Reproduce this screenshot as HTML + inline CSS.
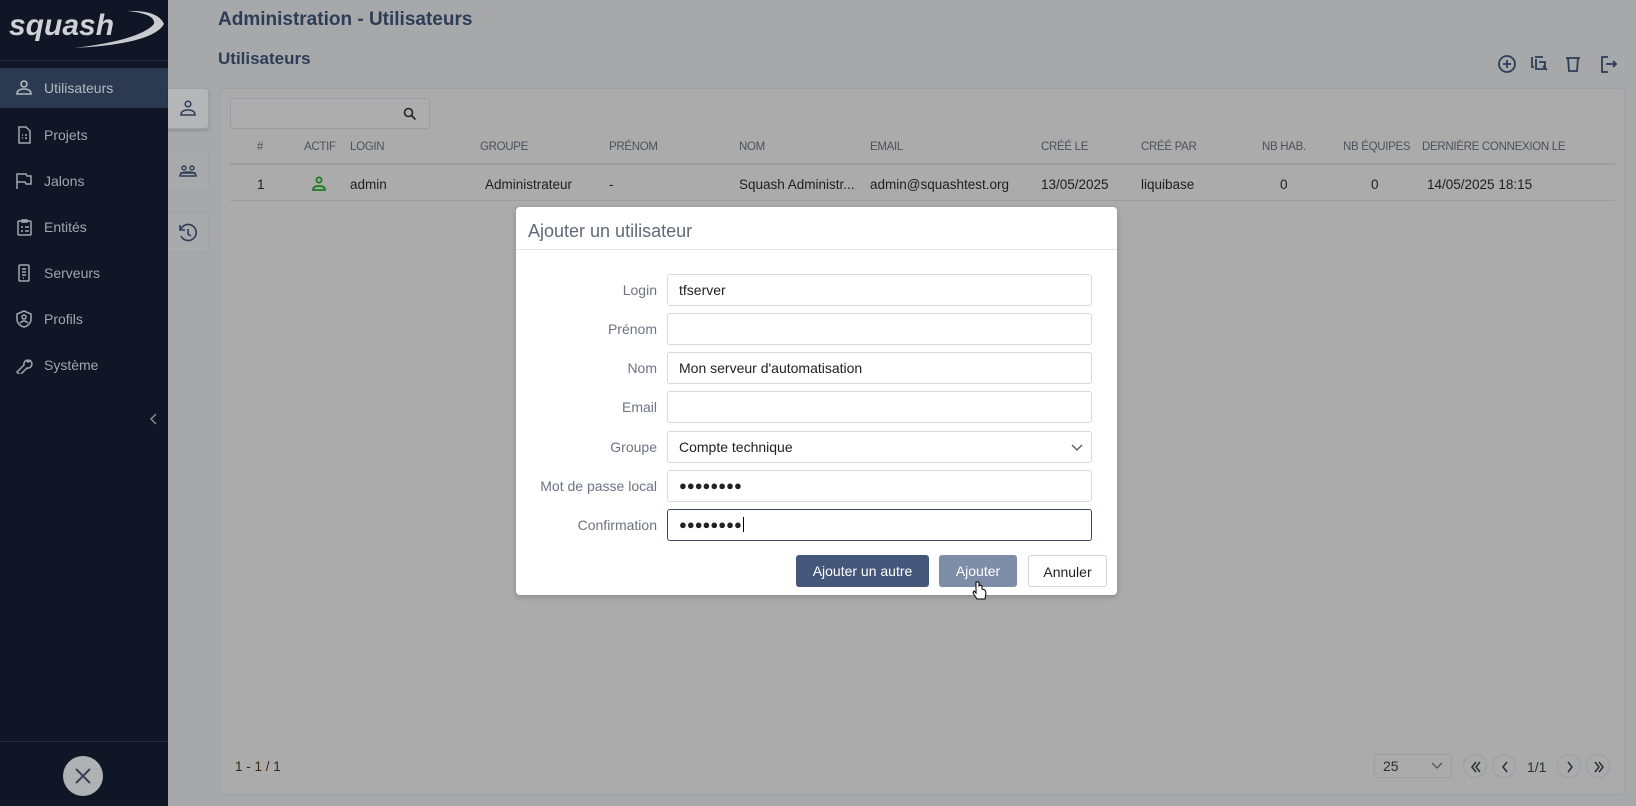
<!DOCTYPE html>
<html><head><meta charset="utf-8"><style>
*{box-sizing:border-box;margin:0;padding:0}
body{width:1636px;height:806px;overflow:hidden;background:#a7a8aa;font-family:"Liberation Sans",sans-serif;position:relative}
.abs{position:absolute}
#side{left:0;top:0;width:168px;height:806px;background:#111626}
.nav{position:absolute;left:0;width:168px;height:40px;color:#a2a6ae;font-size:14px;line-height:40px;padding-left:44px}
.nav svg{position:absolute;left:15px;top:11px}
.nav.act{background:#2c3a51;color:#b3b8c0}
.hdr{position:absolute;font-size:11.5px;letter-spacing:-0.3px;color:#4a525d;top:141px}
.cell{position:absolute;font-size:13.5px;color:#1f1f1f;top:177px}
.tab{position:absolute;left:168px;width:41px;height:41px;background:#a9aaac;border:1px solid #9fa2a6;border-left:none;border-radius:0 4px 4px 0}
.lbl{position:absolute;right:0;width:140px;text-align:right;font-size:14px;color:#6b7480}
.inp{position:absolute;left:667px;width:425px;height:32px;border:1px solid #d6d9de;border-radius:3px;background:#fff;font-size:14px;color:#222;padding-left:11px;line-height:30px}
.btn{position:absolute;top:555px;height:32px;border-radius:3px;font-size:14px;line-height:32px;text-align:center}
.pg{position:absolute;top:754px;width:24px;height:24px;border:1px solid #9c9ea2;border-radius:50%}
.pg svg{position:absolute;left:5px;top:5px}
</style></head><body>
<div id="side" class="abs">
  <div class="abs" style="left:8px;top:4px;width:158px;height:48px">
    <svg width="158" height="48" viewBox="0 0 158 48"><path d="M66 44 Q145 40 156 20 Q150 6 120 7 Q148 10 146 20 Q132 36 66 44Z" fill="#c9cbcf"/><text x="1" y="31" font-family="Liberation Sans" font-style="italic" font-weight="bold" font-size="30" fill="#cfd1d5">squash</text></svg>
  </div>
  <div class="abs" style="left:0;top:60px;width:168px;height:1px;background:#262c3c"></div>
  <div class="nav act" style="top:68px"><svg width="18" height="18" viewBox="0 0 18 18" fill="none" stroke="#b3b8c0" stroke-width="1.6"><circle cx="9" cy="5" r="3"/><path d="M2 15 Q2 10 9 10 Q16 10 16 15Z"/></svg>Utilisateurs</div>
  <div class="nav" style="top:115px"><svg width="18" height="18" viewBox="0 0 18 18" fill="none" stroke="#a2a6ae" stroke-width="1.5"><path d="M4 1h7l4 4v12H4z"/><path d="M7 9h1M10 9h2M7 12h1M10 12h2"/></svg>Projets</div>
  <div class="nav" style="top:161px"><svg width="18" height="18" viewBox="0 0 18 18" fill="none" stroke="#a2a6ae" stroke-width="1.5"><path d="M2 17V2h9l1 2h4v8h-5l-1-2H2"/></svg>Jalons</div>
  <div class="nav" style="top:207px"><svg width="18" height="18" viewBox="0 0 18 18" fill="none" stroke="#a2a6ae" stroke-width="1.5"><rect x="3" y="3" width="13" height="14" rx="1"/><path d="M7 2h5v2H7zM6 9h2M10 9h4M6 13h2M10 13h4"/></svg>Entités</div>
  <div class="nav" style="top:253px"><svg width="18" height="18" viewBox="0 0 18 18" fill="none" stroke="#a2a6ae" stroke-width="1.5"><rect x="4" y="1" width="10" height="16" rx="1"/><path d="M7 5h4M7 8h4M7 11h4M8 14h1"/></svg>Serveurs</div>
  <div class="nav" style="top:299px"><svg width="18" height="18" viewBox="0 0 18 18" fill="none" stroke="#a2a6ae" stroke-width="1.5"><path d="M9 1l7 3v5c0 4-3 7-7 8-4-1-7-4-7-8V4z"/><circle cx="9" cy="7" r="2"/><path d="M5 13q4-4 8 0"/></svg>Profils</div>
  <div class="nav" style="top:345px"><svg width="18" height="18" viewBox="0 0 18 18" fill="none" stroke="#a2a6ae" stroke-width="1.5"><path d="M2 16l7-7a4 4 0 1 1 3 3l-7 7z M11 4l2 2 3-2"/></svg>Système</div>
  <svg class="abs" style="left:150px;top:413px" width="8" height="12" fill="none" stroke="#8a8f99" stroke-width="1.4"><path d="M6 1L1 6l5 5"/></svg>
  <div class="abs" style="left:0;top:741px;width:168px;height:1px;background:#262c3c"></div>
  <div class="abs" style="left:63px;top:756px;width:40px;height:40px;border-radius:50%;background:#b0b1b3"><svg width="40" height="40"><path d="M13 13L27 27M27 13L13 27" stroke="#364459" stroke-width="2"/></svg></div>
</div>

<div class="abs" style="left:218px;top:9px;font-size:19px;font-weight:bold;color:#2e3d57">Administration - Utilisateurs</div>
<div class="abs" style="left:218px;top:49px;font-size:17px;font-weight:bold;color:#2e3d57">Utilisateurs</div>
<svg class="abs" style="left:1495px;top:51px" width="135" height="26" fill="none" stroke="#2e3d57" stroke-width="1.8">
  <circle cx="12" cy="13" r="8"/><path d="M12 9v8M8 13h8"/>
  <path d="M37 6v10h2M41 8v10h10M44 11h6v6M48 15l4 4"/><path d="M40 6h8"/>
  <path d="M71 7h14M73 7l1 13h8l1-13"/>
  <path d="M113 6h-6v15h6M111 13h10M118 10l3 3-3 3"/>
</svg>

<div class="abs" style="left:220px;top:88px;width:1405px;height:707px;background:#ababab;border:1px solid #9ea1a5;border-radius:4px"></div>
<div class="tab" style="top:88px;background:#b5b6b8;box-shadow:0 2px 3px rgba(0,0,0,.15)"><svg width="40" height="40" fill="none" stroke="#2e3d57" stroke-width="1.5"><circle cx="20" cy="15" r="2.8"/><path d="M13 26q0-5 7-5t7 5z"/></svg></div>
<div class="tab" style="top:150px"><svg width="40" height="40" fill="none" stroke="#2e3d57" stroke-width="1.4"><circle cx="16" cy="17" r="2"/><circle cx="24" cy="17" r="2"/><path d="M12 25q0-4 8-4t8 4zM12 22h16"/></svg></div>
<div class="tab" style="top:212px"><svg width="40" height="40" fill="none" stroke="#2e3d57" stroke-width="1.6"><path d="M13 16a8 8 0 1 1 0 7M12 12v5h5M20 16v5l3 2"/></svg></div>

<div class="abs" style="left:230px;top:98px;width:200px;height:31px;border:1px solid #9a9da2;border-radius:3px;background:#adadad"><svg class="abs" style="left:172px;top:8px" width="14" height="14" fill="none" stroke="#222" stroke-width="1.6"><circle cx="5.5" cy="5.5" r="4"/><path d="M8.5 8.5l4 4"/></svg></div>

<div class="hdr" style="left:257px">#</div>
<div class="hdr" style="left:304px">ACTIF</div>
<div class="hdr" style="left:350px">LOGIN</div>
<div class="hdr" style="left:480px">GROUPE</div>
<div class="hdr" style="left:609px">PRÉNOM</div>
<div class="hdr" style="left:739px">NOM</div>
<div class="hdr" style="left:870px">EMAIL</div>
<div class="hdr" style="left:1041px">CRÉÉ LE</div>
<div class="hdr" style="left:1141px">CRÉÉ PAR</div>
<div class="hdr" style="left:1262px">NB HAB.</div>
<div class="hdr" style="left:1343px">NB ÉQUIPES</div>
<div class="hdr" style="left:1422px">DERNIÈRE CONNEXION LE</div>
<div class="abs" style="left:230px;top:163px;width:1385px;height:2px;background:#9a9da1"></div>
<div class="cell" style="left:257px">1</div>
<svg class="abs" style="left:310px;top:175px" width="18" height="18" fill="none" stroke="#1b7a22" stroke-width="1.7"><circle cx="9" cy="5" r="2.6"/><path d="M3 15q0-4 6-4t6 4z"/></svg>
<div class="cell" style="left:350px">admin</div>
<div class="cell" style="left:485px">Administrateur</div>
<div class="cell" style="left:609px">-</div>
<div class="cell" style="left:739px">Squash Administr...</div>
<div class="cell" style="left:870px">admin@squashtest.org</div>
<div class="cell" style="left:1041px">13/05/2025</div>
<div class="cell" style="left:1141px">liquibase</div>
<div class="cell" style="left:1280px">0</div>
<div class="cell" style="left:1371px">0</div>
<div class="cell" style="left:1427px">14/05/2025 18:15</div>
<div class="abs" style="left:230px;top:200px;width:1385px;height:1px;background:#9a9da1"></div>

<div class="abs" style="left:235px;top:759px;font-size:13.5px;color:#3a2a10">1 - 1 / 1</div>
<div class="abs" style="left:1374px;top:754px;width:78px;height:24px;border:1px solid #9c9ea2;border-radius:3px;font-size:14px;color:#2a2e36;padding-left:8px;line-height:22px">25<svg class="abs" style="left:56px;top:7px" width="12" height="8" fill="none" stroke="#555" stroke-width="1.3"><path d="M1 1l5 5 5-5"/></svg></div>
<div class="pg" style="left:1463px"><svg width="14" height="14" fill="none" stroke="#2a2e36" stroke-width="1.5"><path d="M7 2L3 7l4 5M11 2L7 7l4 5"/></svg></div>
<div class="pg" style="left:1492px"><svg width="14" height="14" fill="none" stroke="#2a2e36" stroke-width="1.5"><path d="M9 2L5 7l4 5"/></svg></div>
<div class="abs" style="left:1527px;top:759px;font-size:14px;color:#2a2e36">1/1</div>
<div class="pg" style="left:1557px"><svg width="14" height="14" fill="none" stroke="#2a2e36" stroke-width="1.5"><path d="M5 2l4 5-4 5"/></svg></div>
<div class="pg" style="left:1586px"><svg width="14" height="14" fill="none" stroke="#2a2e36" stroke-width="1.5"><path d="M3 2l4 5-4 5M7 2l4 5-4 5"/></svg></div>

<div class="abs" style="left:516px;top:207px;width:601px;height:388px;background:#fff;border-radius:4px;box-shadow:0 2px 6px rgba(0,0,0,.2)">
  <div class="abs" style="left:12px;top:14px;font-size:18px;color:#5f6976">Ajouter un utilisateur</div>
  <div class="abs" style="left:0;top:42px;width:601px;height:1px;background:#e4e6ea"></div>
</div>
<div class="lbl" style="left:517px;top:282px">Login</div>
<div class="lbl" style="left:517px;top:321px">Prénom</div>
<div class="lbl" style="left:517px;top:360px">Nom</div>
<div class="lbl" style="left:517px;top:399px">Email</div>
<div class="lbl" style="left:517px;top:439px">Groupe</div>
<div class="lbl" style="left:517px;top:478px">Mot de passe local</div>
<div class="lbl" style="left:517px;top:517px">Confirmation</div>
<div class="inp" style="top:274px">tfserver</div>
<div class="inp" style="top:313px"></div>
<div class="inp" style="top:352px">Mon serveur d'automatisation</div>
<div class="inp" style="top:391px"></div>
<div class="inp" style="top:431px">Compte technique<svg class="abs" style="left:403px;top:12px" width="12" height="8" fill="none" stroke="#4a5566" stroke-width="1.3"><path d="M1 1l5 5 5-5"/></svg></div>
<div class="inp" style="top:470px;font-size:13px">●●●●●●●●</div>
<div class="inp" style="top:509px;font-size:13px;border-color:#3c4a60">●●●●●●●●<span style="border-left:1.5px solid #000;margin-left:1px"></span></div>
<div class="btn" style="left:796px;width:133px;background:#44577a;color:#fff">Ajouter un autre</div>
<div class="btn" style="left:939px;width:78px;background:#7e8ea8;color:#fff">Ajouter</div>
<div class="btn" style="left:1028px;width:79px;border:1px solid #d0d4da;color:#222;background:#fff">Annuler</div>
<svg class="abs" style="left:972px;top:580px" width="16" height="22"><path d="M4 2v11l-2-2-1 2 4 6h8l1-6-1-3-3-1V6l-2-1-1 1V2z" fill="#fff" stroke="#000" stroke-width="1"/></svg>
</body></html>
